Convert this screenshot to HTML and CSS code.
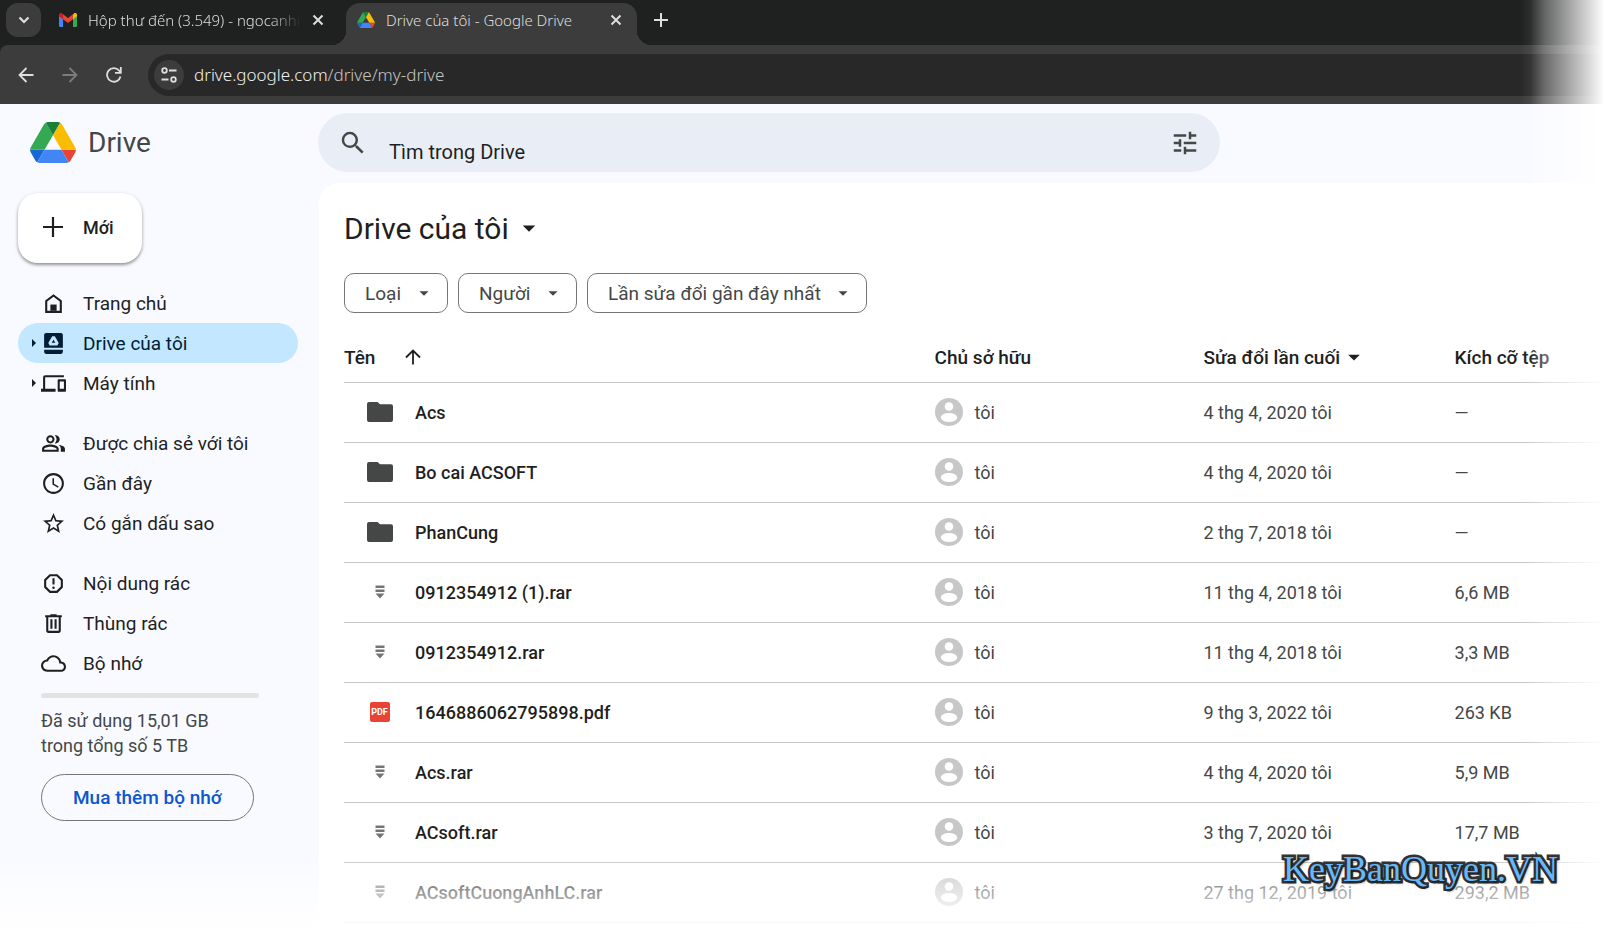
FILE: index.html
```
<!DOCTYPE html>
<html lang="vi">
<head>
<meta charset="UTF-8">
<meta name="viewport" content="width=device-width, initial-scale=1.0">
<title>Drive của tôi - Google Drive</title>
<link rel="stylesheet" href="styles.css">
</head>
<body>

<svg class="sprite" aria-hidden="true">
<symbol id="i-drive" viewBox="0 0 87.3 78">
<path fill="#1967d2" d="m6.6 66.85 3.85 6.65c.8 1.4 1.95 2.5 3.3 3.3l13.75-23.8h-27.5c0 1.55.4 3.1 1.2 4.5z"/>
<path fill="#34a853" d="m43.65 25-13.75-23.8c-1.35.8-2.5 1.9-3.3 3.3l-25.4 44a9.06 9.06 0 0 0-1.2 4.5h27.5z"/>
<path fill="#ea4335" d="m73.55 76.8c1.35-.8 2.5-1.9 3.3-3.3l1.6-2.75 7.65-13.25c.8-1.4 1.2-2.95 1.2-4.5h-27.5z"/>
<path fill="#188038" d="m43.65 25 13.75-23.8c-1.35-.8-2.9-1.2-4.5-1.2h-18.5c-1.6 0-3.15.45-4.5 1.2z"/>
<path fill="#4285f4" d="m59.8 53h-32.3l-13.75 23.8c1.35.8 2.9 1.2 4.5 1.2h50.8c1.6 0 3.15-.45 4.5-1.2z"/>
<path fill="#fbbc04" d="m73.4 26.5-12.7-22c-.8-1.4-1.95-2.5-3.3-3.3l-13.75 23.8 16.15 28h27.45c0-1.55-.4-3.1-1.2-4.5z"/>
</symbol>
<symbol id="i-close" viewBox="0 0 12 12"><path d="M1.5 1.5l9 9M10.5 1.5l-9 9" fill="none" stroke="currentColor" stroke-width="2"/></symbol>
<symbol id="i-down" viewBox="0 0 24 24"><path d="M7 10l5 5 5-5z"/></symbol>
<symbol id="i-right" viewBox="0 0 6 8"><path d="M1 0l4 4-4 4z"/></symbol>
<symbol id="i-folder" viewBox="0 0 26 20"><path d="M2 0h8.500l2.500 2.300H24a2 2 0 0 1 2 2V18a2 2 0 0 1-2 2H2a2 2 0 0 1-2-2V2a2 2 0 0 1 2-2z"/></symbol>
<symbol id="i-rar" viewBox="0 0 10 14"><path d="M.5.500h9v2.500h-9zM.5 4.500h9V7h-9zM.5 8.500h9L5 13.500z"/></symbol>
<symbol id="i-user" viewBox="0 0 28 28"><circle cx="14" cy="14" r="14" fill="#c7c7c7"/><circle cx="14" cy="8.500" r="4.300" fill="#fff"/><ellipse cx="14" cy="19.500" rx="8.200" ry="4.500" fill="#fff"/></symbol>
</svg>

<header class="browser">
<div class="tabs">
<button class="tab-search" aria-label="Tìm thẻ"><svg width="12" height="8" viewBox="0 0 12 8"><path d="M1.500 1.500L6 6l4.500-4.500" fill="none" stroke="currentColor" stroke-width="2.200"/></svg></button>
<div class="tab">
<svg width="18" height="14" viewBox="0 0 18 14"><path fill="#4285f4" d="M0 3v9.800C0 13.500.500 14 1.200 14H4V5z"/><path fill="#34a853" d="M18 3v9.800c0 .7-.5 1.200-1.200 1.200H14V5z"/><path fill="#fbbc04" d="M14 1.500V6.300l4-3V2c0-2-2-2.500-3.200-1.500z"/><path fill="#ea4335" d="M4 6.300V1.300l5 3.800 5-3.800v5L9 10z"/><path fill="#c5221f" d="M0 2v1.300l4 3V1.300L3.200.500C2-.5 0 0 0 2z"/></svg>
<span class="tab-title faded">Hộp thư đến (3.549) - ngocanhi</span>
<button class="tab-close" aria-label="Đóng"><svg width="12" height="12"><use href="#i-close"/></svg></button>
</div>
<div class="tab active">
<svg width="18" height="16"><use href="#i-drive"/></svg>
<span class="tab-title">Drive của tôi - Google Drive</span>
<button class="tab-close" aria-label="Đóng"><svg width="12" height="12"><use href="#i-close"/></svg></button>
</div>
<button class="tab-new" aria-label="Thẻ mới"><svg width="14" height="14" viewBox="0 0 14 14"><path d="M7 0v14M0 7h14" stroke="currentColor" stroke-width="2"/></svg></button>
</div>
<div class="toolbar">
<button class="nav-btn" aria-label="Quay lại"><svg width="16" height="16" viewBox="0 0 16 16"><path d="M15.500 8H2M8.500 1L1.500 8l7 7" fill="none" stroke="currentColor" stroke-width="1.800"/></svg></button>
<button class="nav-btn off" aria-label="Tiến"><svg width="16" height="16" viewBox="0 0 16 16"><path d="M.5 8H14M7.500 1l7 7-7 7" fill="none" stroke="currentColor" stroke-width="1.800"/></svg></button>
<button class="nav-btn" aria-label="Tải lại"><svg width="16" height="16" viewBox="0 0 16 16"><path d="M14.500 9.500A6.800 6.800 0 1 1 13.200 3.700L14.500 5M14.800 0v5.800H9" fill="none" stroke="currentColor" stroke-width="1.800"/></svg></button>
<div class="address">
<button class="site-info" aria-label="Thông tin trang web"><svg width="16" height="16" viewBox="0 0 16 16" fill="none" stroke="currentColor" stroke-width="1.800"><circle cx="3.500" cy="3.500" r="2.300" fill="none"/><path d="M8 3.500h7.500M.500 12.500h7"/><circle cx="12.500" cy="12.500" r="2.300" fill="none"/></svg></button>
<span class="url">drive.google.com<span class="path">/drive/my-drive</span></span>
</div>
</div>
</header>

<div class="app">
<header class="top">
<a class="brand" href="#"><svg width="46" height="41"><use href="#i-drive"/></svg>Drive</a>
<form class="search">
<svg width="30" height="30" viewBox="0 0 24 24"><path d="M15.500 14h-.79l-.28-.27A6.470 6.470 0 0 0 16 9.500 6.500 6.500 0 1 0 9.500 16c1.610 0 3.090-.59 4.230-1.570l.27.28v.79l5 4.990L20.490 19l-4.990-5zm-6 0C7.010 14 5 11.990 5 9.500S7.010 5 9.500 5 14 7.010 14 9.500 11.990 14 9.500 14z"/></svg>
<input type="text" placeholder="Tìm trong Drive" aria-label="Tìm trong Drive">
<button type="button" class="tune" aria-label="Tìm kiếm nâng cao"><svg width="30" height="30" viewBox="0 0 24 24"><path d="M3 17v2h6v-2H3zM3 5v2h10V5H3zm10 16v-2h8v-2h-8v-2h-2v6h2zM7 9v2H3v2h4v2h2V9H7zm14 4v-2H11v2h10zm-6-4h2V7h4V5h-4V3h-2v6z"/></svg></button>
</form>
</header>

<aside class="sidebar">
<button class="new"><svg width="20" height="20" viewBox="0 0 20 20"><path d="M10 0v20M0 10h20" stroke="currentColor" stroke-width="2.200"/></svg>Mới</button>

<nav>
<ul>
<li><a href="#"><span class="caret"></span><svg class="ico" viewBox="0 0 24 24"><path d="M12 3l-8 6v12h16V9zm6 16H6v-9l6-4.500 6 4.500z"/><path d="M9 13h6v6H9z"/></svg>Trang chủ</a></li>
<li><a class="current" href="#"><span class="caret"><svg width="6" height="8"><use href="#i-right"/></svg></span><svg class="ico" viewBox="0 0 24 24"><path fill-rule="evenodd" d="M5 2h14c1.100 0 2 .9 2 2v12H3V4c0-1.100.900-2 2-2zm5.700 3L7 11.500 8.300 14h7.400l1.300-2.500L13.300 5zM12 8.300l1.700 3h-3.400z"/><path d="M3 18h18v2c0 1.100-.9 2-2 2H5c-1.100 0-2-.9-2-2z"/></svg>Drive của tôi</a></li>
<li><a href="#"><span class="caret"><svg width="6" height="8"><use href="#i-right"/></svg></span><svg class="ico" viewBox="0 0 24 24"><path d="M4 6h18V4H4c-1.100 0-2 .9-2 2v11H0v3h14v-3H4V6zm19 2h-6c-.55 0-1 .45-1 1v10c0 .55.45 1 1 1h6c.55 0 1-.45 1-1V9c0-.55-.45-1-1-1zm-1 9h-4v-7h4v7z"/></svg>Máy tính</a></li>
</ul>
<ul>
<li><a href="#"><span class="caret"></span><svg class="ico" viewBox="0 0 24 24"><path d="M9 12c2.200 0 4-1.800 4-4s-1.800-4-4-4-4 1.800-4 4 1.800 4 4 4zm0-6c1.100 0 2 .9 2 2s-.9 2-2 2-2-.9-2-2 .9-2 2-2zM9 13c-2.700 0-8 1.300-8 4v3h16v-3c0-2.700-5.300-4-8-4zm6 5H3v-1c.2-.7 3.300-2 6-2s5.800 1.300 6 2zM14 12c2.200 0 4-1.800 4-4s-1.800-4-4-4c-.3 0-.6 0-.9.1A6 6 0 0 1 15 8a6 6 0 0 1-1.700 3.900zM16.700 13.200C18.200 14.100 19 15.500 19 17v3h4v-3c0-2.200-3.300-3.300-6.300-3.800z"/></svg>Được chia sẻ với tôi</a></li>
<li><a href="#"><span class="caret"></span><svg class="ico" viewBox="0 0 24 24"><path d="M11.990 2C6.470 2 2 6.480 2 12s4.470 10 9.990 10C17.520 22 22 17.520 22 12S17.520 2 11.990 2zM12 20c-4.420 0-8-3.580-8-8s3.580-8 8-8 8 3.580 8 8-3.580 8-8 8zm.5-13H11v6l5.250 3.150.750-1.230-4.500-2.670z"/></svg>Gần đây</a></li>
<li><a href="#"><span class="caret"></span><svg class="ico" viewBox="0 0 24 24"><path d="M22 9.240l-7.190-.62L12 2 9.190 8.630 2 9.240l5.460 4.730L5.820 21 12 17.270 18.180 21l-1.630-7.030zM12 15.400l-3.760 2.270 1-4.280-3.320-2.880 4.380-.38L12 6.100l1.710 4.040 4.380.38-3.320 2.880 1 4.280z"/></svg>Có gắn dấu sao</a></li>
</ul>
<ul>
<li><a href="#"><span class="caret"></span><svg class="ico" viewBox="0 0 24 24"><path d="M15.730 3H8.270L3 8.270v7.460L8.270 21h7.460L21 15.730V8.270zM19 14.900L14.900 19H9.100L5 14.900V9.100L9.100 5h5.800L19 9.100zM11 7h2v6h-2z"/><circle cx="12" cy="16" r="1.200"/></svg>Nội dung rác</a></li>
<li><a href="#"><span class="caret"></span><svg class="ico" viewBox="0 0 24 24"><path d="M15 4V3H9v1H4v2h1v13c0 1.100.900 2 2 2h10c1.100 0 2-.9 2-2V6h1V4zm2 15H7V6h10zM9 8h2v9H9zm4 0h2v9h-2z"/></svg>Thùng rác</a></li>
<li><a href="#"><span class="caret"></span><svg class="ico" viewBox="0 0 24 24"><path d="M19.350 10.040A7.490 7.490 0 0 0 12 4C9.110 4 6.600 5.640 5.350 8.040A5.994 5.994 0 0 0 0 14c0 3.310 2.690 6 6 6h13c2.760 0 5-2.240 5-5 0-2.640-2.050-4.780-4.650-4.960zM19 18H6c-2.210 0-4-1.790-4-4s1.790-4 4-4h.71C7.370 7.690 9.480 6 12 6c3.040 0 5.500 2.460 5.500 5.500v.5H19c1.660 0 3 1.340 3 3s-1.340 3-3 3z"/></svg>Bộ nhớ</a></li>
</ul>
</nav>

<div class="storage">
<div class="storage-bar"></div>
<p>Đã sử dụng 15,01 GB trong tổng số 5 TB</p>
<button class="buy">Mua thêm bộ nhớ</button>
</div>
</aside>

<main class="panel">
<h1><button class="title">Drive của tôi<svg width="30" height="30"><use href="#i-down"/></svg></button></h1>

<div class="filters">
<div class="chip"><select aria-label="Loại"><option>Loại</option></select><svg width="22" height="22"><use href="#i-down"/></svg></div>
<div class="chip"><select aria-label="Người"><option>Người</option></select><svg width="22" height="22"><use href="#i-down"/></svg></div>
<div class="chip"><select aria-label="Lần sửa đổi gần đây nhất"><option>Lần sửa đổi gần đây nhất</option></select><svg width="22" height="22"><use href="#i-down"/></svg></div>
</div>

<table class="files">
<thead>
<tr>
<th class="col-name"><div class="cell head">Tên<svg width="16" height="16" viewBox="0 0 16 16"><path d="M8 15.500V2M1 8.500l7-7 7 7" fill="none" stroke="currentColor" stroke-width="1.800"/></svg></div></th>
<th class="col-owner">Chủ sở hữu</th>
<th class="col-date"><div class="cell">Sửa đổi lần cuối<svg width="28" height="28"><use href="#i-down"/></svg></div></th>
<th class="col-size">Kích cỡ tệp</th>
</tr>
</thead>
<tbody>
<tr>
<td><div class="cell name"><span class="type"><svg width="26" height="20"><use href="#i-folder"/></svg></span>Acs</div></td>
<td><div class="cell owner"><svg width="28" height="28"><use href="#i-user"/></svg>tôi</div></td>
<td>4 thg 4, 2020 tôi</td>
<td>—</td>
</tr>
<tr>
<td><div class="cell name"><span class="type"><svg width="26" height="20"><use href="#i-folder"/></svg></span>Bo cai ACSOFT</div></td>
<td><div class="cell owner"><svg width="28" height="28"><use href="#i-user"/></svg>tôi</div></td>
<td>4 thg 4, 2020 tôi</td>
<td>—</td>
</tr>
<tr>
<td><div class="cell name"><span class="type"><svg width="26" height="20"><use href="#i-folder"/></svg></span>PhanCung</div></td>
<td><div class="cell owner"><svg width="28" height="28"><use href="#i-user"/></svg>tôi</div></td>
<td>2 thg 7, 2018 tôi</td>
<td>—</td>
</tr>
<tr>
<td><div class="cell name"><span class="type rar"><svg width="10" height="14"><use href="#i-rar"/></svg></span>0912354912 (1).rar</div></td>
<td><div class="cell owner"><svg width="28" height="28"><use href="#i-user"/></svg>tôi</div></td>
<td>11 thg 4, 2018 tôi</td>
<td>6,6 MB</td>
</tr>
<tr>
<td><div class="cell name"><span class="type rar"><svg width="10" height="14"><use href="#i-rar"/></svg></span>0912354912.rar</div></td>
<td><div class="cell owner"><svg width="28" height="28"><use href="#i-user"/></svg>tôi</div></td>
<td>11 thg 4, 2018 tôi</td>
<td>3,3 MB</td>
</tr>
<tr>
<td><div class="cell name"><span class="type"><span class="pdf">PDF</span></span>1646886062795898.pdf</div></td>
<td><div class="cell owner"><svg width="28" height="28"><use href="#i-user"/></svg>tôi</div></td>
<td>9 thg 3, 2022 tôi</td>
<td>263 KB</td>
</tr>
<tr>
<td><div class="cell name"><span class="type rar"><svg width="10" height="14"><use href="#i-rar"/></svg></span>Acs.rar</div></td>
<td><div class="cell owner"><svg width="28" height="28"><use href="#i-user"/></svg>tôi</div></td>
<td>4 thg 4, 2020 tôi</td>
<td>5,9 MB</td>
</tr>
<tr>
<td><div class="cell name"><span class="type rar"><svg width="10" height="14"><use href="#i-rar"/></svg></span>ACsoft.rar</div></td>
<td><div class="cell owner"><svg width="28" height="28"><use href="#i-user"/></svg>tôi</div></td>
<td>3 thg 7, 2020 tôi</td>
<td>17,7 MB</td>
</tr>
<tr>
<td><div class="cell name"><span class="type rar"><svg width="10" height="14"><use href="#i-rar"/></svg></span>ACsoftCuongAnhLC.rar</div></td>
<td><div class="cell owner"><svg width="28" height="28"><use href="#i-user"/></svg>tôi</div></td>
<td>27 thg 12, 2019 tôi</td>
<td>293,2 MB</td>
</tr>
</tbody>
</table>
</main>
</div>

<div class="fade-right"></div>
<div class="fade-bottom"></div>
<div class="watermark">KeyBanQuyen.VN</div>
</body>
</html>
```
FILE: styles.css
```
* {
box-sizing: border-box;
}

body {
margin: 0;
min-height: 100vh;
display: flex;
flex-direction: column;
position: relative;
overflow: hidden;
background-color: #f9faff;
color: #1f1f1f;
font-family: Roboto, "Noto Sans", sans-serif;
font-size: 18px;
}

button, input, select {
font: inherit;
color: inherit;
background: none;
border: none;
padding: 0;
}

svg {
fill: currentColor;
flex: none;
}

a {
color: inherit;
text-decoration: none;
}

.sprite {
position: absolute;
width: 0;
height: 0;
}

/* browser window */
.browser {
background-color: #1f2120;
color: #dedede;
font-family: "Noto Sans", "Open Sans", sans-serif;
font-weight: 300;
}

.tabs {
display: flex;
height: 45px;
padding: 3px 0 0 6px;
}

.tab-search {
display: flex;
align-items: center;
justify-content: center;
width: 35px;
height: 34px;
border-radius: 12px;
background-color: #3c3c3c;
}

.tab {
display: flex;
align-items: center;
gap: 11px;
width: 291px;
padding: 0 15px 8px 11px;
margin-left: 7px;
font-size: 15px;
}

.tab.active {
position: relative;
margin-left: 7px;
border-radius: 14px 14px 0 0;
background-color: #3c3c3c;
}

.tab.active::before,
.tab.active::after {
content: "";
position: absolute;
bottom: 0;
width: 14px;
height: 14px;
}

.tab.active::before {
right: 100%;
background: radial-gradient(circle at 0 0, transparent 14px, #3c3c3c 14px);
}

.tab.active::after {
left: 100%;
background: radial-gradient(circle at 100% 0, transparent 14px, #3c3c3c 14px);
}

.tab-title {
flex: 1;
overflow: hidden;
white-space: nowrap;
}

.faded {
-webkit-mask-image: linear-gradient(to right, #000 85%, transparent);
mask-image: linear-gradient(to right, #000 85%, transparent);
}

.tab-close {
display: flex;
}

.tab-new {
display: flex;
align-items: center;
margin-left: 17px;
padding-bottom: 8px;
}

.toolbar {
display: flex;
align-items: center;
height: 59px;
padding-left: 18px;
border-radius: 8px 0 0 0;
background-color: #3c3c3c;
}

.nav-btn {
display: flex;
margin-right: 28px;
}

.nav-btn.off {
color: #7c7c7c;
}

.address {
flex: 1;
display: flex;
align-items: center;
gap: 10px;
height: 42px;
margin-left: -2px;
padding-left: 6px;
border-radius: 21px 0 0 21px;
background-color: #282828;
}

.site-info {
display: flex;
align-items: center;
justify-content: center;
width: 30px;
height: 30px;
border-radius: 50%;
background-color: #3c3c3c;
}

.url {
color: #f0f0f0;
font-size: 17px;
}

.path {
color: #c4c4c4;
}

/* app */
.app {
flex: 1;
display: grid;
grid-template-columns: 319px 1fr;
grid-template-rows: 79px 1fr;
}

.top {
grid-column: 1 / 3;
display: grid;
grid-template-columns: 318px 1fr;
align-items: center;
padding-bottom: 2px;
}

.brand {
display: flex;
align-items: center;
gap: 12px;
padding-left: 30px;
color: #444746;
font-size: 28px;
}

.search {
display: flex;
align-items: center;
width: 70%;
height: 59px;
padding: 0 20px;
border-radius: 30px;
background-color: #e9eef6;
color: #444746;
}

.search input {
flex: 1;
height: 59px;
padding: 18px 0 0 21px;
color: #1f1f1f;
font-size: 20px;
outline: none;
}

.search input::placeholder {
color: #1f1f1f;
}

.tune {
display: flex;
}

.sidebar {
padding: 10px 21px 0 18px;
}

.new {
display: flex;
align-items: center;
gap: 20px;
height: 70px;
padding: 0 28px 2px 25px;
border-radius: 20px;
background-color: #fff;
box-shadow: 0 2px 3px rgba(0, 0, 0, .35), 0 1px 5px rgba(0, 0, 0, .1);
font-weight: 500;
}

nav {
padding-top: 20px;
font-size: 19px;
}

nav ul {
list-style: none;
margin: 0 0 20px;
padding: 0;
}

nav a {
display: flex;
align-items: center;
height: 40px;
border-radius: 20px;
}

nav a.current {
background-color: #c2e7ff;
color: #001d35;
}

.caret {
display: flex;
justify-content: flex-end;
width: 23px;
padding-right: 4px;
}

.ico {
width: 25px;
height: 25px;
margin-right: 17px;
}

.storage {
padding-left: 23px;
}

.storage-bar {
height: 5px;
width: 218px;
margin-top: -10px;
border-radius: 3px;
background-color: #e1e3e1;
}

.storage p {
width: 190px;
margin: 10px 0 16px;
color: #444746;
line-height: 25px;
}

.buy {
height: 47px;
padding: 0 31px;
border: 1px solid #747775;
border-radius: 24px;
color: #0b57d0;
font-size: 19px;
font-weight: 500;
}

.panel {
padding: 20px 0 0 25px;
border-radius: 20px 0 0 0;
background-color: #fff;
}

h1 {
margin: 0;
font-size: 30px;
font-weight: 400;
}

.title {
display: flex;
align-items: center;
gap: 5px;
height: 50px;
}

.filters {
display: flex;
gap: 10px;
padding: 20px 0;
color: #444746;
font-size: 19px;
}

.chip {
display: flex;
align-items: center;
}

.chip select {
appearance: none;
height: 40px;
padding: 0 45px 0 20px;
border: 1px solid #747775;
border-radius: 10px;
}

.chip svg {
margin: 0 13px 0 -35px;
pointer-events: none;
}

.files {
width: 100%;
table-layout: fixed;
border-collapse: collapse;
}

.files th,
.files td {
height: 60px;
padding: 0;
border-bottom: 1px solid #c7c7c7;
text-align: left;
white-space: nowrap;
color: #444746;
}

.files th {
height: 49px;
font-size: 19px;
font-weight: 500;
color: #1f1f1f;
}

.col-name {
width: 46.8%;
}

.col-owner {
width: 21.3%;
}

.col-date {
width: 19.9%;
}

.col-size {
width: 12%;
}

.cell {
display: flex;
align-items: center;
}

.head {
gap: 30px;
}

.name {
color: #1f1f1f;
font-weight: 500;
}

.type {
display: flex;
justify-content: center;
width: 71px;
color: #444746;
}

.type.rar {
color: #757575;
}

.pdf {
width: 20px;
border-radius: 2px;
background-color: #ea4335;
color: #fff;
font-size: 9px;
font-weight: 700;
line-height: 20px;
text-align: center;
}

.owner {
gap: 12px;
}

/* soft edges over the page */
.fade-right,
.fade-bottom {
position: absolute;
right: 0;
bottom: 0;
pointer-events: none;
}

.fade-right {
top: 0;
width: 86px;
background: linear-gradient(to right, rgba(255, 255, 255, 0), rgba(255, 255, 255, .06) 12%, rgba(255, 255, 255, .3) 28%, #fff 98%);
}

.fade-bottom {
left: 0;
height: 80px;
background: linear-gradient(rgba(255, 255, 255, 0), rgba(255, 255, 255, .5) 40%, #fff 95%);
}

.watermark {
position: absolute;
right: 48px;
bottom: 48px;
color: #66b8fc;
font-family: "Liberation Serif", serif;
font-size: 36px;
line-height: 40px;
-webkit-text-stroke: 5px #333;
paint-order: stroke fill;
text-shadow: 2px 2px 3px rgba(0, 0, 0, .5);
}
```
